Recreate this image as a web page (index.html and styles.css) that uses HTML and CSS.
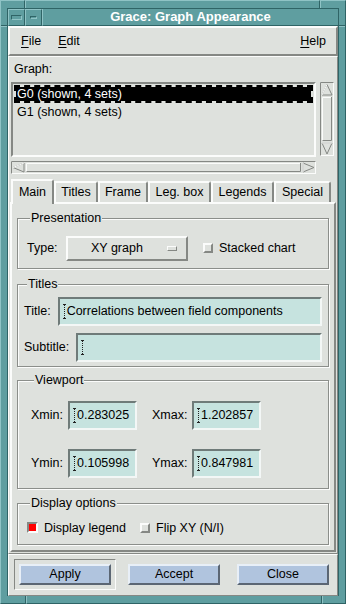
FILE: index.html
```html
<!DOCTYPE html>
<html lang="en">
<head>
    <meta charset="UTF-8">
    <meta name="viewport" content="width=device-width, initial-scale=1.0">
    <title>Grace: Graph Appearance</title>
    <link rel="stylesheet" href="styles.css">
</head>
<body>

<div class="wm">
    <div class="edge edge-top">
        <span class="seg seg-left"></span><span class="seg seg-fill"></span><span class="seg seg-right"></span>
    </div>

    <div class="wm-mid">
        <div class="side side-left">
            <span class="side-top"></span><span class="side-fill"></span>
        </div>

        <div class="inner">
            <div class="titlebar">
                <span class="tb-btn"><span class="ico-menu"></span></span>
                <span class="tb-btn"><span class="ico-min"></span></span>
                <span class="tb-title">Grace: Graph Appearance</span>
            </div>

            <div class="client">
                <div class="menubar">
                    <span class="menu"><u>F</u>ile</span>
                    <span class="menu"><u>E</u>dit</span>
                    <span class="menu menu-help"><u>H</u>elp</span>
                </div>

                <div class="form">
                    <div class="graph-label">Graph:</div>

                    <div class="list-row">
                        <div class="list">
                            <div class="item selected">G0 (shown, 4 sets)</div>
                            <div class="item">G1 (shown, 4 sets)</div>
                        </div>
                        <svg class="vscroll" width="14" height="74" viewBox="0 0 14 74">
                            <rect x="0.5" y="0.5" width="13" height="73" fill="#dee1dd" stroke="#fbfcfb"/>
                            <path d="M0.5 73.5 V0.5 H13.5" fill="none" stroke="#858884"/>
                            <polygon points="7,2.5 12,13 2,13" fill="#dee1dd" stroke="#858884"/>
                            <path d="M7 2.5 L2 13" stroke="#fbfcfb"/>
                            <rect x="2" y="15" width="10" height="44" fill="#dee1dd"/>
                            <path d="M2.5 59 V15.5 H11.5" fill="none" stroke="#fbfcfb"/>
                            <path d="M2.5 58.5 H11.5 V15" fill="none" stroke="#858884"/>
                            <polygon points="2,61 12,61 7,72" fill="#dee1dd" stroke="#858884"/>
                            <path d="M2 61 H12" stroke="#fbfcfb"/>
                        </svg>
                    </div>

                    <svg class="hscroll" width="305" height="13" viewBox="0 0 305 13">
                        <rect x="0.5" y="0.5" width="304" height="12" fill="#dee1dd" stroke="#fbfcfb"/>
                        <path d="M0.5 12.5 V0.5 H304.5" fill="none" stroke="#858884"/>
                        <polygon points="2,6.5 13,2 13,11" fill="#dee1dd" stroke="#858884"/>
                        <path d="M2 6.5 L13 2" stroke="#fbfcfb"/>
                        <rect x="15" y="2" width="275" height="9" fill="#dee1dd"/>
                        <path d="M15.5 11 V2.5 H290" fill="none" stroke="#fbfcfb"/>
                        <path d="M15.5 10.5 H289.5 V2" fill="none" stroke="#858884"/>
                        <polygon points="292,2 292,11 303,6.5" fill="#dee1dd" stroke="#858884"/>
                        <path d="M292 11 V2" stroke="#fbfcfb"/>
                    </svg>

                    <div class="tabs">
                        <span class="tab tab-main active">Main</span>
                        <span class="tab tab-titles">Titles</span>
                        <span class="tab tab-frame">Frame</span>
                        <span class="tab tab-legbox">Leg. box</span>
                        <span class="tab tab-legends">Legends</span>
                        <span class="tab tab-special">Special</span>
                    </div>

                    <div class="panel">
                        <fieldset class="group group-presentation">
                            <legend>Presentation</legend>
                            <div class="row">
                                <span class="lbl lbl-type">Type:</span>
                                <span class="option-btn">XY graph<span class="option-ind"></span></span>
                                <span class="check"></span>
                                <span>Stacked chart</span>
                            </div>
                        </fieldset>

                        <fieldset class="group group-titles">
                            <legend>Titles</legend>
                            <div class="row">
                                <span class="lbl">Title:</span>
                                <span class="field field-wide"><span class="caret"></span>Correlations between field components</span>
                            </div>
                            <div class="row row-sub">
                                <span class="lbl">Subtitle:</span>
                                <span class="field field-wide"><span class="caret"></span></span>
                            </div>
                        </fieldset>

                        <fieldset class="group group-viewport">
                            <legend>Viewport</legend>
                            <div class="row">
                                <span class="lbl lbl-min">Xmin:</span>
                                <span class="field field-num"><span class="caret"></span>0.283025</span>
                                <span class="lbl lbl-max">Xmax:</span>
                                <span class="field field-num"><span class="caret"></span>1.202857</span>
                            </div>
                            <div class="row row-y">
                                <span class="lbl lbl-min">Ymin:</span>
                                <span class="field field-num"><span class="caret"></span>0.105998</span>
                                <span class="lbl lbl-max">Ymax:</span>
                                <span class="field field-num"><span class="caret"></span>0.847981</span>
                            </div>
                        </fieldset>

                        <fieldset class="group group-display">
                            <legend>Display options</legend>
                            <div class="row">
                                <span class="check checked"></span>
                                <span>Display legend</span>
                                <span class="check check-flip"></span>
                                <span>Flip XY (N/I)</span>
                            </div>
                        </fieldset>
                    </div>
                </div>

                <div class="actions">
                    <span class="default-wrap"><span class="btn">Apply</span></span>
                    <span class="btn btn-accept">Accept</span>
                    <span class="btn btn-close">Close</span>
                </div>
            </div>
        </div>

        <div class="side side-right">
            <span class="side-top"></span><span class="side-fill"></span>
        </div>
    </div>

    <div class="edge edge-bottom">
        <span class="seg seg-left-b"></span><span class="seg seg-fill"></span><span class="seg seg-right-b"></span>
    </div>
</div>

</body>
</html>
```

FILE: styles.css
```css
body {
    margin: 0;
    font-family: "Liberation Sans", Arial, sans-serif;
    font-size: 12.5px;
    color: #000;
    background-color: #5f9ea0;
}

/* window manager frame */
.wm {
    width: 346px;
    height: 604px;
    display: flex;
    flex-direction: column;
    background-color: #5f9ea0;
}
.edge {
    display: flex;
}
.edge-top {
    height: 8px;
}
.edge-bottom {
    height: 9px;
}
.seg {
    box-sizing: border-box;
    height: 100%;
    border-left: 1px solid #8fc3c5;
    border-right: 1px solid #2f6466;
}
.edge-top .seg {
    border-top: 1px solid #8fc3c5;
}
.edge-bottom .seg {
    border-bottom: 1px solid #2f6466;
}
.seg-left {
    width: 25px;
}
.seg-fill {
    flex: 1;
}
.seg-right {
    width: 26px;
}
.seg-left-b {
    width: 26px;
}
.seg-right-b {
    width: 24px;
}
.wm-mid {
    display: flex;
    flex: 1;
}
.side {
    width: 8px;
    display: flex;
    flex-direction: column;
}
.side-top {
    height: 17px;
    border-bottom: 1px solid #2f6466;
}
.side-fill {
    flex: 1;
    border-top: 1px solid #8fc3c5;
}
.side-left {
    border-left: 1px solid #8fc3c5;
    border-right: 1px solid #2f6466;
    box-sizing: border-box;
}
.side-right {
    border-left: 1px solid #2f6466;
    border-right: 1px solid #2f6466;
    box-sizing: border-box;
}
.inner {
    flex: 1;
    display: flex;
    flex-direction: column;
}

.titlebar {
    height: 17px;
    display: flex;
    border-top: 1px solid #2f6466;
}
.tb-btn {
    box-sizing: border-box;
    width: 17px;
    height: 17px;
    border-left: 1px solid #8fc3c5;
    border-top: 1px solid #8fc3c5;
    border-right: 1px solid #2f6466;
    border-bottom: 1px solid #2f6466;
    display: flex;
    align-items: center;
    justify-content: center;
}
.ico-menu {
    width: 9px;
    height: 3px;
    border: 1px solid #2f6466;
    border-bottom-color: #8fc3c5;
    border-right-color: #8fc3c5;
}
.ico-min {
    width: 5px;
    height: 1px;
    border: 1px solid #2f6466;
    border-bottom-color: #8fc3c5;
    border-right-color: #8fc3c5;
}
.tb-title {
    flex: 1;
    box-sizing: border-box;
    border-left: 1px solid #8fc3c5;
    border-bottom: 1px solid #2f6466;
    color: #ffffff;
    font-weight: bold;
    font-size: 13px;
    text-align: center;
    line-height: 15px;
}

/* client area */
.client {
    flex: 1;
    display: flex;
    flex-direction: column;
    background-color: #dee1dd;
}
.menubar {
    box-sizing: border-box;
    height: 30px;
    display: flex;
    align-items: center;
    padding: 0 10px 0 11px;
    border: 2px solid;
    border-color: #fbfcfb #858884 #858884 #fbfcfb;
}
.menu {
    margin-right: 17px;
}
.menu u {
    text-decoration-thickness: 1px;
    text-underline-offset: 2px;
}
.menu-help {
    margin-left: auto;
    margin-right: 0;
}

.form {
    box-sizing: border-box;
    height: 498px;
    padding: 0 0 0 1px;
    border: 1px solid;
    border-color: #fbfcfb #858884 #858884 #fbfcfb;
}
.graph-label {
    margin: 4px 0 5px 4px;
    line-height: 16px;
}
.list-row {
    display: flex;
    gap: 4px;
    margin-left: 1px;
    height: 75px;
}
.list {
    box-sizing: border-box;
    width: 305px;
    height: 75px;
    border: 2px solid;
    border-color: #858884 #fbfcfb #fbfcfb #858884;
    padding: 1px;
}
.item {
    box-sizing: border-box;
    height: 18px;
    line-height: 14px;
    padding-left: 1px;
    border: 2px solid transparent;
}
.item.selected {
    background-color: #000;
    color: #fff;
    border: 2px dashed #000;
    background-clip: padding-box;
}
.vscroll {
    display: block;
}
.hscroll {
    display: block;
    margin: 4px 0 0 1px;
}

/* tabs */
.tabs {
    display: flex;
    align-items: flex-end;
    margin: 5px 0 0 1px;
    height: 23px;
    position: relative;
    z-index: 1;
}
.tab {
    box-sizing: border-box;
    height: 21px;
    text-align: center;
    line-height: 19px;
    border: 2px solid;
    border-bottom: none;
    border-color: #fbfcfb #858884 #858884 #fbfcfb;
    border-top-right-radius: 3px;
}
.tab.active {
    height: 25px;
    line-height: 22px;
    margin-bottom: -2px;
    background-color: #dee1dd;
}
.tab-main { width: 43px; }
.tab-titles { width: 44px; }
.tab-frame { width: 50px; }
.tab-legbox { width: 63px; }
.tab-legends { width: 63px; }
.tab-special { width: 57px; }

.panel {
    box-sizing: border-box;
    width: 326px;
    height: 350px;
    border: 2px solid;
    border-color: #fbfcfb #858884 #858884 #fbfcfb;
    padding-top: 7px;
}

/* etched groups */
.group {
    margin: 0 5px;
    min-width: 0;
    border: 1px solid #8b8e8a;
    box-shadow: 1px 1px 0 #fbfcfb, inset 1px 1px 0 #fbfcfb;
}
.group legend {
    margin-left: 3px;
    padding: 0 1px;
    line-height: 15px;
    background-color: #dee1dd;
}
.row {
    display: flex;
    align-items: center;
}
.group-presentation {
    padding: 10px 6px 7px 9px;
}
.lbl-type {
    width: 39px;
}
.option-btn {
    box-sizing: border-box;
    width: 122px;
    height: 25px;
    display: flex;
    align-items: center;
    padding: 0 9px 0 23px;
    border: 2px solid;
    border-color: #fbfcfb #858884 #858884 #fbfcfb;
}
.option-ind {
    margin-left: auto;
    width: 8px;
    height: 3px;
    border: 1px solid;
    border-color: #fbfcfb #858884 #858884 #fbfcfb;
}
.check {
    box-sizing: border-box;
    width: 10px;
    height: 10px;
    margin: 0 6px 0 15px;
    border: 2px solid;
    border-color: #fbfcfb #858884 #858884 #fbfcfb;
}
.check.checked {
    width: 11px;
    height: 11px;
    margin: 0 6px 0 0;
    background-color: #ff0000;
    border-color: #858884 #fbfcfb #fbfcfb #858884;
}
.check.check-flip {
    margin-left: 14px;
}

.group-titles {
    margin-top: 8px;
    padding: 5px 6px 4px 6px;
}
.group-titles .lbl {
    margin-right: 7px;
}
.row-sub {
    margin-top: 7px;
}
.field {
    box-sizing: border-box;
    height: 29px;
    display: flex;
    align-items: center;
    padding-left: 3px;
    background-color: #c6e3df;
    border: 2px solid;
    border-color: #6f7b79 #f3f7f6 #f3f7f6 #6f7b79;
}
.field-wide {
    flex: 1;
}
.caret {
    box-sizing: border-box;
    width: 3px;
    height: 15px;
    margin-right: 1px;
    border-top: 1px solid #222;
    border-bottom: 1px solid #222;
    background-image: repeating-linear-gradient(to bottom, #222 0 1px, transparent 1px 2px);
    background-size: 1px 100%;
    background-position: center;
    background-repeat: no-repeat;
}

.group-viewport {
    margin-top: 6px;
    padding: 13px 6px 10px 13px;
}
.lbl-min {
    width: 37px;
}
.lbl-max {
    width: 40px;
    margin-left: 15px;
}
.field-num {
    width: 69px;
}
.row-y {
    margin-top: 19px;
}

.group-display {
    margin-top: 7px;
    padding: 9px 6px 8px 9px;
}
.group-display .row {
    height: 16px;
}

/* action area */
.actions {
    box-sizing: border-box;
    height: 42px;
    display: flex;
    align-items: center;
    padding-left: 5px;
    border: 1px solid;
    border-color: #fbfcfb #858884 #858884 #fbfcfb;
}
.default-wrap {
    box-sizing: border-box;
    width: 102px;
    height: 31px;
    padding: 4px;
    border: 1px solid;
    border-color: #858884 #fbfcfb #fbfcfb #858884;
}
.btn {
    box-sizing: border-box;
    display: block;
    width: 92px;
    height: 21px;
    line-height: 17px;
    text-align: center;
    background-color: #b0c4de;
    border: 2px solid;
    border-color: #e8eff7 #5b6673 #5b6673 #e8eff7;
}
.btn-accept {
    margin-left: 12px;
}
.btn-close {
    margin-left: 17px;
}
```
